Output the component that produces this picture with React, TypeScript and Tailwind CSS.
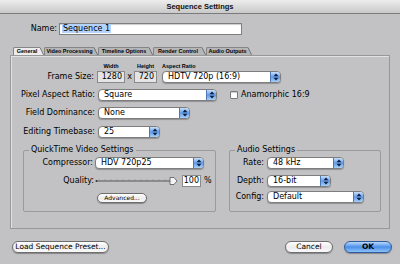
import React from "react";

function Arrows() {
  return (
    <svg width="6" height="8" viewBox="0 0 6 8">
      <path d="M0.6 3.3 L3 0.6 L5.4 3.3Z" fill="#101c3a" />
      <path d="M0.6 4.7 L3 7.4 L5.4 4.7Z" fill="#101c3a" />
    </svg>
  );
}

function PopUp({ value, w }: { value: string; w: string }) {
  return (
    <div className={`${w} h-[12px] flex rounded-[4px] border border-[#7d7d7d] bg-white shadow-[0_1px_1px_rgba(0,0,0,0.25)] overflow-hidden`}>
      <span className="flex-1 pl-[5px] text-[8px] leading-[10px] text-black whitespace-nowrap">{value}</span>
      <span className="w-[10px] flex items-center justify-center border-l border-[#4c76b4] bg-gradient-to-b from-[#c9e0fb] via-[#5f9ae8] to-[#a8d0f8]">
        <Arrows />
      </span>
    </div>
  );
}

function Pill({ label, w, blue }: { label: string; w: string; blue?: boolean }) {
  return (
    <div
      className={`${w} h-[12px] rounded-full border flex items-center justify-center text-[7.5px] leading-[10px] whitespace-nowrap shadow-[0_1px_1px_rgba(0,0,0,0.3)] ${
        blue
          ? "border-[#2f5a9c] bg-gradient-to-b from-[#b9d9fb] via-[#4b8fe8] to-[#8cc2f7] font-bold"
          : "border-[#6d6d6d] bg-gradient-to-b from-white via-[#ececec] to-[#fafafa]"
      }`}
    >
      {label}
    </div>
  );
}

function Tab({ label, w, active }: { label: string; w: string; active?: boolean }) {
  const fill = active ? "#ececec" : "#b6b6b8";
  return (
    <div className="flex h-[8px]">
      <div
        className={`${w} h-full border-t border-l border-[#858585] rounded-tl-[2px] text-[5.5px] font-bold leading-[7px] text-center whitespace-nowrap font-['Liberation_Sans',sans-serif] ${
          active ? "bg-[#ececec]" : "bg-[#b6b6b8]"
        }`}
      >
        {label}
      </div>
      <svg width="4" height="8" viewBox="0 0 4 8">
        <path d="M0 0 L4 8 L0 8Z" fill={fill} />
        <path d="M0 0.5 L3.6 8" stroke="#6a6a6a" strokeWidth="0.9" fill="none" />
      </svg>
    </div>
  );
}

function Slider() {
  const ticks = Array.from({ length: 12 }, (_, i) => 4 + i * 6);
  return (
    <svg width="84" height="10" viewBox="0 0 84 10">
      <circle cx="1.5" cy="5" r="1" fill="#333" />
      <line x1="2" y1="5" x2="76" y2="5" stroke="#555" strokeWidth="1" />
      {ticks.map((x) => (
        <line key={x} x1={x} y1="3.5" x2={x} y2="4.5" stroke="#777" strokeWidth="0.8" />
      ))}
      <path d="M75 1.5 L79 1.5 L82 5 L79 8.5 L75 8.5Z" fill="#f4f4f4" stroke="#555" strokeWidth="0.8" />
    </svg>
  );
}

export default function App() {
  return (
    <div className="w-[400px] h-[264px] bg-[#c2c2c4] flex flex-col overflow-hidden whitespace-nowrap font-['DejaVu_Sans',sans-serif] text-[8px] text-black">
      <div className="h-[14px] border-b border-[#7b7b7b] bg-gradient-to-b from-[#ededed] to-[#c9c9c9] flex items-center justify-center text-[7.5px] font-bold font-['Liberation_Sans',sans-serif] text-[#111]">
        Sequence Settings
      </div>

      <div className="mt-[9px] flex items-center h-[12px]">
        <span className="w-[59px] text-right pr-[2px] leading-[10px]">Name:</span>
        <div className="w-[183px] h-[12px] border border-[#7f7f7f] bg-white shadow-[inset_0_1px_1px_rgba(0,0,0,0.2)] pl-[2px] leading-[10px]">
          <span className="bg-[#b4d3fc] px-[1px]">Sequence 1</span>
        </div>
      </div>

      <div className="mt-[12px] pl-[13px] flex h-[8px] items-end">
        <Tab label="General" w="w-[27px]" active />
        <Tab label="Video Processing" w="w-[50px]" />
        <Tab label="Timeline Options" w="w-[51px]" />
        <Tab label="Render Control" w="w-[49px]" />
        <Tab label="Audio Outputs" w="w-[42px]" />
      </div>

      <div className="mx-[10px] h-[174px] border border-[#989898] shadow-[inset_1px_1px_0_#e2e2e2] flex flex-col">
        <div className="mt-[6px] h-[8px] flex items-center text-[5.5px] font-bold font-['Liberation_Sans',sans-serif] leading-[8px]">
          <span className="w-[86px]" />
          <span className="w-[28px] text-center">Width</span>
          <span className="w-[9px]" />
          <span className="w-[23px] text-center">Height</span>
          <span className="w-[5px]" />
          <span>Aspect Ratio</span>
        </div>

        <div className="mt-[1px] h-[12px] flex items-center">
          <span className="w-[86px] text-right pr-[3px]">Frame Size:</span>
          <div className="w-[28px] h-[12px] border border-[#8a8a8a] bg-[#e4e4e4] text-right pr-[2px] leading-[10px]">1280</div>
          <span className="w-[9px] text-center">x</span>
          <div className="w-[23px] h-[12px] border border-[#8a8a8a] bg-[#e4e4e4] text-right pr-[2px] leading-[10px]">720</div>
          <span className="w-[5px]" />
          <PopUp value="HDTV 720p (16:9)" w="w-[119px]" />
        </div>

        <div className="mt-[6px] h-[12px] flex items-center">
          <span className="w-[87px] text-right pr-[3px]">Pixel Aspect Ratio:</span>
          <PopUp value="Square" w="w-[119px]" />
          <span className="ml-[13px] w-[8px] h-[8px] border border-[#7a7a7a] bg-white rounded-[1px] shadow-[inset_0_1px_1px_rgba(0,0,0,0.2)]" />
          <span className="ml-[3px] leading-[10px]">Anamorphic 16:9</span>
        </div>

        <div className="mt-[6px] h-[12px] flex items-center">
          <span className="w-[87px] text-right pr-[3px]">Field Dominance:</span>
          <PopUp value="None" w="w-[92px]" />
        </div>

        <div className="mt-[7px] h-[12px] flex items-center">
          <span className="w-[87px] text-right pr-[3px]">Editing Timebase:</span>
          <PopUp value="25" w="w-[62px]" />
        </div>

        <div className="mt-[8px] flex">
          <fieldset className="ml-[12px] w-[193px] h-[66px] border border-[#9a9a9a] rounded-[2px] flex flex-col">
            <legend className="ml-[5px] px-[2px] leading-[8px]">QuickTime Video Settings</legend>
            <div className="mt-[3px] h-[12px] flex items-center">
              <span className="w-[71px] text-right pr-[2px]">Compressor:</span>
              <PopUp value="HDV 720p25" w="w-[109px]" />
            </div>
            <div className="mt-[6px] h-[12px] flex items-center">
              <span className="w-[71px] text-right pr-[1px]">Quality:</span>
              <Slider />
              <div className="ml-[3px] w-[19px] h-[12px] border border-[#8a8a8a] bg-white text-right pr-[1px] leading-[10px]">100</div>
              <span className="ml-[3px]">%</span>
            </div>
            <div className="mt-[6px] pl-[73px]">
              <div className="w-[50px] h-[10px] rounded-full border border-[#6d6d6d] bg-gradient-to-b from-white via-[#ececec] to-[#fafafa] shadow-[0_1px_1px_rgba(0,0,0,0.3)] flex items-center justify-center text-[6px] leading-[8px]">
                Advanced...
              </div>
            </div>
          </fieldset>

          <fieldset className="ml-[13px] w-[152px] h-[66px] border border-[#9a9a9a] rounded-[2px] flex flex-col">
            <legend className="ml-[5px] px-[2px] leading-[8px]">Audio Settings</legend>
            <div className="mt-[3px] h-[12px] flex items-center">
              <span className="w-[37px] text-right pr-[3px]">Rate:</span>
              <PopUp value="48 kHz" w="w-[77px]" />
            </div>
            <div className="mt-[6px] h-[12px] flex items-center">
              <span className="w-[37px] text-right pr-[3px]">Depth:</span>
              <PopUp value="16-bit" w="w-[64px]" />
            </div>
            <div className="mt-[4px] h-[12px] flex items-center">
              <span className="w-[37px] text-right pr-[3px]">Config:</span>
              <PopUp value="Default" w="w-[97px]" />
            </div>
          </fieldset>
        </div>
      </div>

      <div className="mt-[12px] flex items-center pl-[12px] pr-[8px]">
        <Pill label="Load Sequence Preset..." w="w-[97px]" />
        <div className="flex-1" />
        <Pill label="Cancel" w="w-[48px]" />
        <div className="w-[11px]" />
        <Pill label="OK" w="w-[48px]" blue />
      </div>
    </div>
  );
}
